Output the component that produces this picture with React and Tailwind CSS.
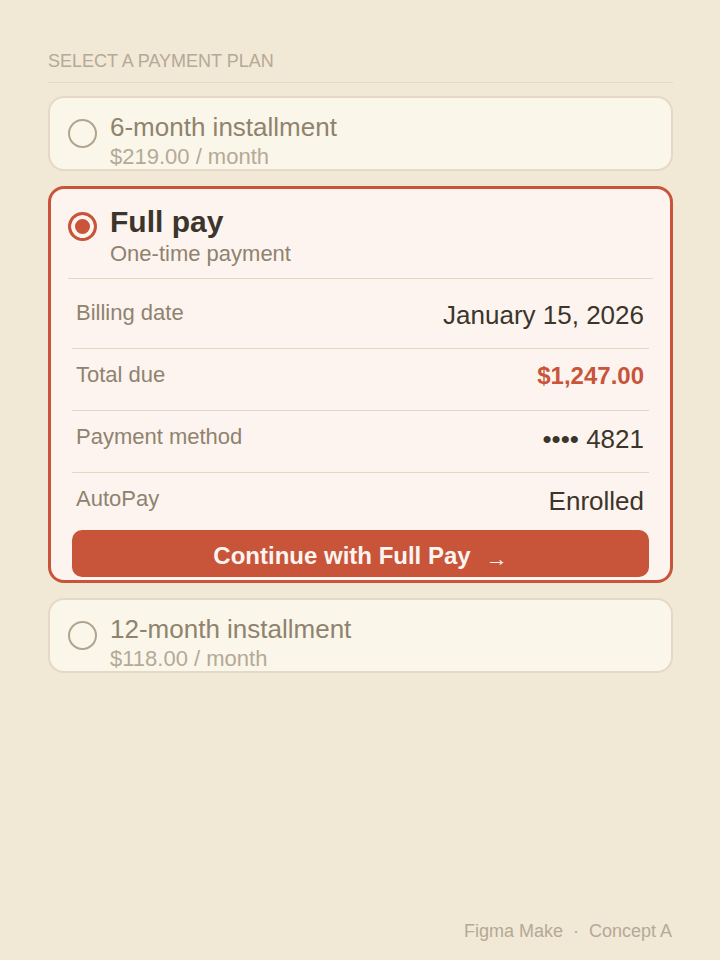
import React, { useState } from 'react';
import clsx from 'clsx';

const plans = [
  { id: 'six', name: '6-month installment', note: '$219.00 / month' },
  {
    id: 'full',
    name: 'Full pay',
    note: 'One-time payment',
    action: 'Continue with Full Pay',
    details: [
      { label: 'Billing date', value: 'January 15, 2026' },
      { label: 'Total due', value: '$1,247.00', highlight: true },
      { label: 'Payment method', value: '•••• 4821' },
      { label: 'AutoPay', value: 'Enrolled' },
    ],
  },
  { id: 'twelve', name: '12-month installment', note: '$118.00 / month' },
];

function PlanDetails({ details, action }) {
  return (
    <div className="px-1 pt-2 pb-[3px]">
      <dl>
        {details.map((row) => (
          <div
            key={row.label}
            className="flex items-start justify-between border-b border-[#e5d8c3] pt-[13px] pr-[5px] pb-[18px] pl-1 last:border-b-0 last:pb-[14px]"
          >
            <dt className="text-[22px] leading-[26px] text-[#8f836f]">{row.label}</dt>
            <dd
              className={clsx(
                row.highlight
                  ? 'pb-0.5 text-[24px] leading-[28px] font-bold text-[#c8543a]'
                  : 'text-[26px] leading-[30px] text-[#3b352b]'
              )}
            >
              {row.value}
            </dd>
          </div>
        ))}
      </dl>
      <button
        type="button"
        className="flex h-[47px] w-full cursor-pointer items-center justify-center gap-[15px] rounded-[10px] bg-[#c8543a] pt-1 text-[24px] leading-[28px] font-bold text-[#fdf4ef]"
      >
        {action}
        <span className="pt-1.5 text-[22px] font-normal">→</span>
      </button>
    </div>
  );
}

function PlanCard({ plan, selected, onSelect }) {
  return (
    <div
      className={clsx(
        'rounded-[16px]',
        selected
          ? 'border-3 border-[#c8543a] bg-[#fdf4ef] px-[17px]'
          : 'border-2 border-[#e5d8c6] bg-[#faf6e9] px-[18px]'
      )}
    >
      <label
        className={clsx(
          'flex cursor-pointer items-start gap-[13px] pt-[14px]',
          plan.details && 'border-b border-[#e5d8c3] pb-3'
        )}
      >
        <input
          type="radio"
          name="plan"
          value={plan.id}
          checked={selected}
          onChange={() => onSelect(plan.id)}
          className={clsx(
            'size-[29px] shrink-0 appearance-none rounded-full',
            selected
              ? 'mt-[9px] border-3 border-[#c8543a] bg-[#c8543a] shadow-[inset_0_0_0_4px_#fdf4ef]'
              : 'mt-[7px] border-2 border-[#b0a48f]'
          )}
        />
        <span className="block">
          <span
            className={clsx(
              'block',
              selected
                ? 'pb-px text-[30px] leading-[38px] font-bold text-[#3b352b]'
                : 'pb-[3px] text-[26px] leading-[30px] text-[#8f836f]'
            )}
          >
            {plan.name}
          </span>
          <span
            className={clsx('block text-[22px] leading-[24px]', selected ? 'text-[#8f836f]' : 'text-[#b5a997]')}
          >
            {plan.note}
          </span>
        </span>
      </label>
      {plan.details && <PlanDetails details={plan.details} action={plan.action} />}
    </div>
  );
}

export default function App() {
  const [selectedId, setSelectedId] = useState('full');

  return (
    <div className="flex min-h-screen flex-col bg-[#f1e8d5] pt-[51px] pr-[47px] pb-[19px] pl-12 font-['Liberation_Sans',Arial,sans-serif]">
      <main>
        <h1 className="border-b border-[#e5d8c6] pb-[11px] text-[18px] leading-[20px] text-[#b5a997]">
          SELECT A PAYMENT PLAN
        </h1>

        <div className="flex flex-col gap-[15px] pt-[13px]" role="radiogroup" aria-label="Payment plan">
          {plans.map((plan) => (
            <PlanCard key={plan.id} plan={plan} selected={plan.id === selectedId} onSelect={setSelectedId} />
          ))}
        </div>
      </main>

      <footer className="mt-auto flex justify-end gap-[10px] pr-px text-[18px] leading-[20px] text-[#b5a997]">
        <span>Figma Make</span>
        <span>·</span>
        <span>Concept A</span>
      </footer>
    </div>
  );
}
